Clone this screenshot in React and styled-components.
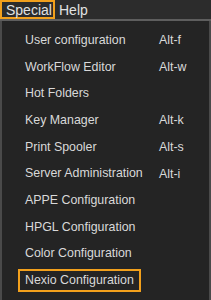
import React from 'react'
import styled, { createGlobalStyle } from 'styled-components'

const GlobalStyle = createGlobalStyle`
  html, body {
    margin: 0;
    padding: 0;
    background: #262626;
  }
  body {
    font-family: "Liberation Sans", Arial, sans-serif;
  }
`

const items = [
  { label: 'User configuration', key: 'Alt-f' },
  { label: 'WorkFlow Editor', key: 'Alt-w' },
  { label: 'Hot Folders' },
  { label: 'Key Manager', key: 'Alt-k' },
  { label: 'Print Spooler', key: 'Alt-s' },
  { label: 'Server Administration', key: 'Alt-i' },
  { label: 'APPE Configuration' },
  { label: 'HPGL Configuration' },
  { label: 'Color Configuration' },
  { label: 'Nexio Configuration', marked: true },
]

const App = () => {
  return (
    <>
      <GlobalStyle />
      <Screen>
        <MenuBar>
          <MenuTitle $active>Special</MenuTitle>
          <MenuTitle>Help</MenuTitle>
        </MenuBar>
        <Dropdown>
          {items.map((item) => (
            <Row key={item.label}>
              <Label $marked={item.marked}>{item.label}</Label>
              {item.key && <Shortcut>{item.key}</Shortcut>}
            </Row>
          ))}
        </Dropdown>
      </Screen>
    </>
  )
}

const Screen = styled.div`
  width: 211px;
  height: 300px;
  overflow: hidden;
  background: #252525;
  color: #d9d9d9;
  font-size: 12.4px;
`

const MenuBar = styled.div`
  height: 19px;
  display: flex;
  align-items: stretch;
  background: #2c2c2c;
  border-bottom: 2px solid #5e5e5e;
`

const MenuTitle = styled.div`
  display: flex;
  align-items: center;
  padding: 0 ${(p) => (p.$active ? '4px' : '2px')};
  border: 2px solid ${(p) => (p.$active ? '#f2a01c' : 'transparent')};
  color: #e2e2e2;
  font-size: 14px;
  box-sizing: border-box;
  width: ${(p) => (p.$active ? '55px' : 'auto')};
`

const Dropdown = styled.div`
  height: 279px;
  box-sizing: border-box;
  padding-top: 6px;
  background: #242424;
  border-left: 2px solid #4a4a4a;
  border-right: 2px solid #4a4a4a;
`

const Row = styled.div`
  height: 26.7px;
  display: grid;
  grid-template-columns: 141px auto;
  align-items: center;
  justify-items: start;
  padding-left: 16px;
`

const Label = styled.span`
  padding: 2px 5px 3px;
  border: 2px solid ${(p) => (p.$marked ? '#f2a01c' : 'transparent')};
  white-space: nowrap;
`

const Shortcut = styled.span`
  white-space: nowrap;
`

export default App
